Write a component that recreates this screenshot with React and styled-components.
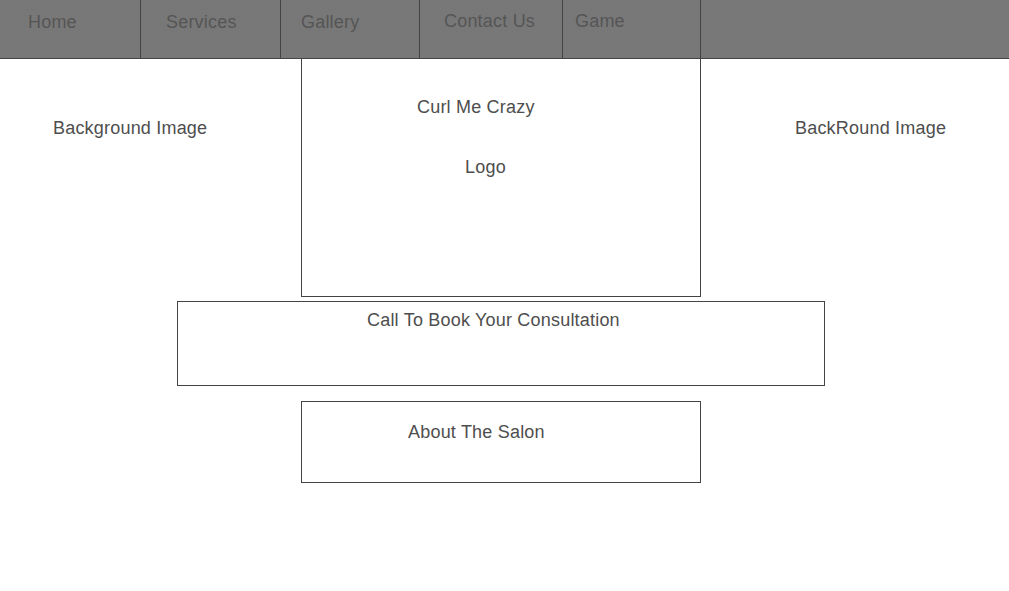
import React from "react";
import styled, { createGlobalStyle } from "styled-components";

const Global = createGlobalStyle`
  html, body { margin: 0; padding: 0; background: #fff; }
  body {
    font-family: "Liberation Sans", Arial, sans-serif;
    font-size: 18px;
    line-height: 21px;
    letter-spacing: 0.2px;
    color: #4e4e4e;
  }
`;

const Page = styled.div`
  width: 1009px;
  display: flex;
  flex-direction: column;
`;

const NavBar = styled.nav`
  display: flex;
  height: 58px;
  background-color: #777;
  background-image: repeating-conic-gradient(#757575 0 25%, #7a7a7a 0 50%);
  background-size: 2px 2px;
  border-bottom: 1px solid #444;
`;

const NavItem = styled.div`
  width: ${(p) => p.$w}px;
  box-sizing: border-box;
  border-right: 1px solid #444;
  padding: ${(p) => p.$top}px 0 0 ${(p) => p.$left}px;
  color: #555;
`;

const TopRow = styled.div`
  display: grid;
  grid-template-columns: 301px 400px 1fr;
`;

const SideLabel = styled.div`
  padding: 59px 0 0 ${(p) => p.$left}px;
`;

const LogoBox = styled.div`
  height: 238px;
  border: 1px solid #444;
  border-top: none;
  padding-top: 38px;
  box-sizing: border-box;
  display: flex;
  flex-direction: column;
`;

const Line = styled.div`
  padding-left: ${(p) => p.$left}px;
  margin-top: ${(p) => p.$mt || 0}px;
`;

const Stack = styled.div`
  display: flex;
  flex-direction: column;
  align-items: flex-start;
`;

const Panel = styled.div`
  box-sizing: border-box;
  width: ${(p) => p.$w}px;
  height: ${(p) => p.$h}px;
  margin-left: ${(p) => p.$x}px;
  margin-top: ${(p) => p.$mt}px;
  border: 1px solid #444;
  padding: ${(p) => p.$pt}px 0 0 ${(p) => p.$pl}px;
`;

const navItems = [
  { label: "Home", w: 141, left: 28, top: 12 },
  { label: "Services", w: 140, left: 25, top: 12 },
  { label: "Gallery", w: 139, left: 20, top: 12 },
  { label: "Contact Us", w: 143, left: 24, top: 11 },
  { label: "Game", w: 138, left: 12, top: 11 },
];

export default function App() {
  return (
    <Page>
      <Global />
      <NavBar>
        {navItems.map((n) => (
          <NavItem key={n.label} $w={n.w} $left={n.left} $top={n.top}>
            {n.label}
          </NavItem>
        ))}
      </NavBar>
      <TopRow>
        <SideLabel $left={53}>Background Image</SideLabel>
        <LogoBox>
          <Line $left={115}>Curl Me Crazy</Line>
          <Line $left={163} $mt={39}>Logo</Line>
        </LogoBox>
        <SideLabel $left={94}>BackRound Image</SideLabel>
      </TopRow>
      <Stack>
        <Panel $w={648} $h={85} $x={177} $mt={4} $pt={8} $pl={189}>
          Call To Book Your Consultation
        </Panel>
        <Panel $w={400} $h={82} $x={301} $mt={15} $pt={20} $pl={106}>
          About The Salon
        </Panel>
      </Stack>
    </Page>
  );
}
